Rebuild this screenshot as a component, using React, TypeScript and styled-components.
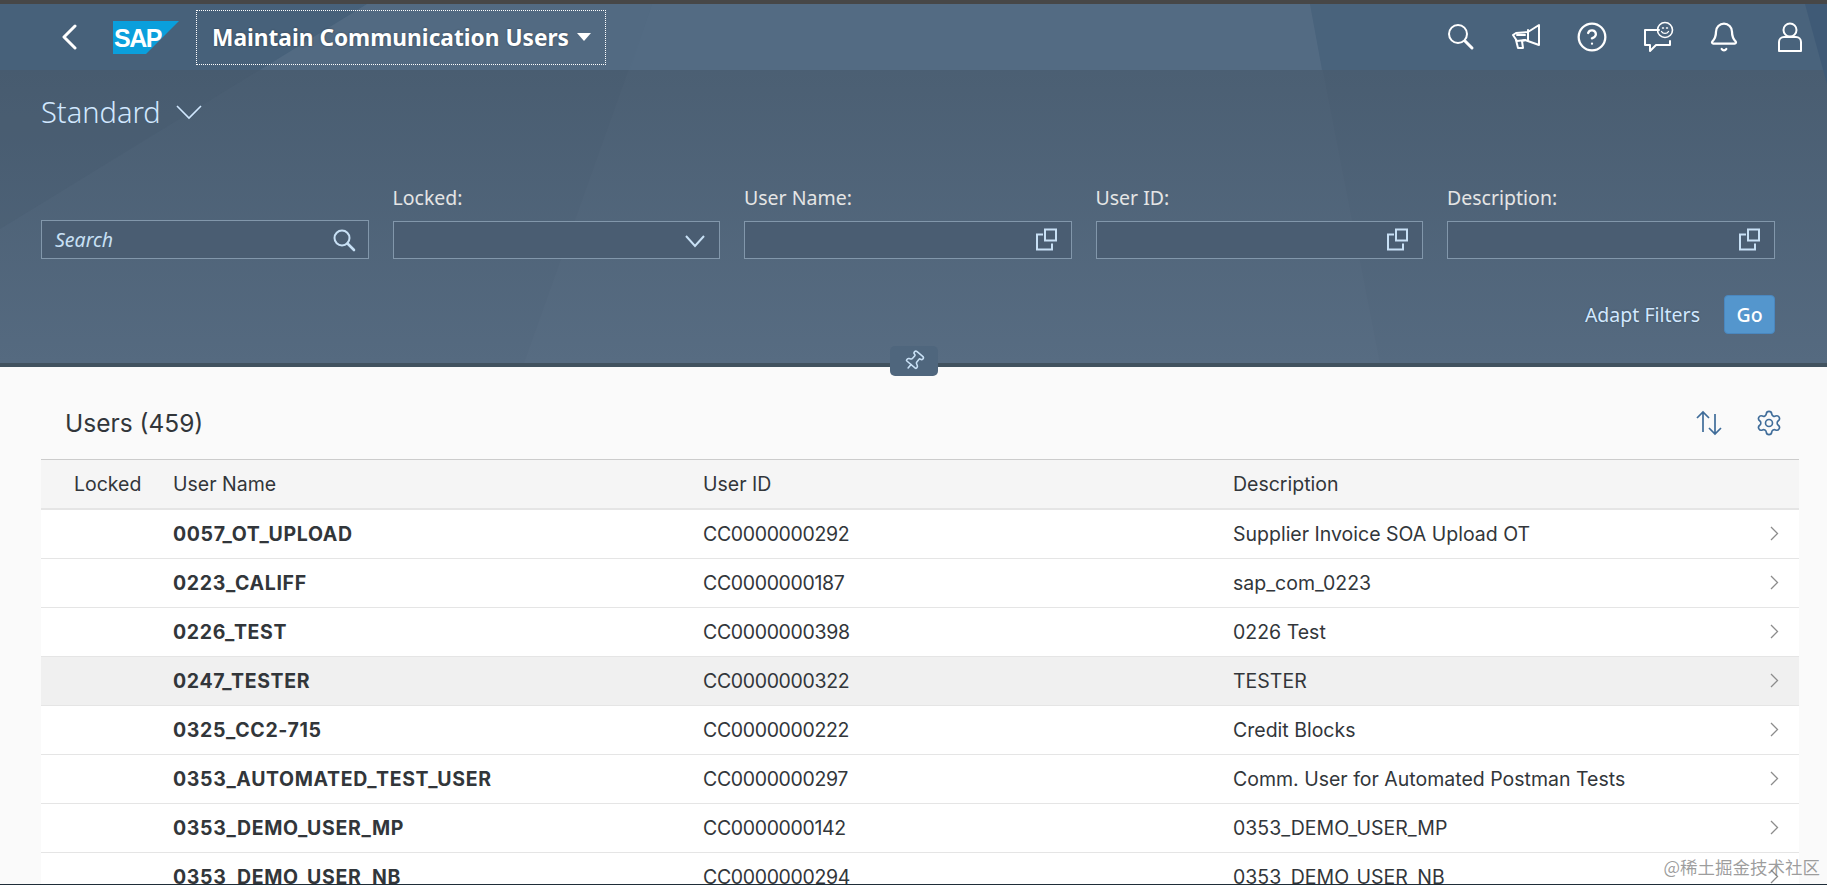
import React from "react";
import styled, { createGlobalStyle } from "styled-components";
import { Settings, Pin, CircleHelp, Bell } from "lucide-react";

const Global = createGlobalStyle`
  html, body { margin: 0; padding: 0; height: 100%; overflow: hidden; background: #fafafa; }
  body { font-family: "Noto Sans", "Open Sans", Arial, sans-serif; }
  * { box-sizing: border-box; }
`;

const Page = styled.div`
  position: relative;
  width: 1827px;
  height: 885px;
  overflow: hidden;
  background: #fafafa;
  border-bottom: 1px solid #1f2d38;
`;
const TopLine = styled.div`
  height: 4px;
  background: #474747;
`;
const Hero = styled.div`
  position: relative;
  height: 359px;
  background: #4a5f75;
  border-bottom: 4px solid #41525f;
  box-sizing: content-box;
`;
const Backdrop = styled.svg`
  position: absolute;
  inset: 0;
  width: 100%;
  height: 100%;
`;
const ShellBar = styled.header`
  position: relative;
  display: flex;
  align-items: center;
  height: 66px;
  padding: 0 21px 0 61px;
`;
const BackBtn = styled.svg`
  display: block;
  width: 18px;
  height: 26px;
  fill: none;
  stroke: #fff;
  stroke-width: 3;
  stroke-linecap: round;
  stroke-linejoin: round;
`;
const Logo = styled.svg`
  display: block;
  width: 66px;
  height: 33px;
  margin-left: 34px;
`;
const TitleBox = styled.div`
  display: flex;
  align-items: center;
  width: 410px;
  height: 55px;
  margin-left: 17px;
  padding-left: 15px;
  border: 1px dotted #fff;
  color: #fff;
  font-size: 22.7px;
  font-weight: 700;
  text-shadow: 0 0 2px rgba(0, 0, 0, 0.45);
  white-space: nowrap;
`;
const Caret = styled.span`
  width: 0;
  height: 0;
  margin-left: 8px;
  border-left: 7px solid transparent;
  border-right: 7px solid transparent;
  border-top: 8px solid #fff;
`;
const ShellIcons = styled.div`
  display: flex;
  gap: 34px;
  margin-left: auto;
  color: #fff;
`;
const ShellIcon = styled.svg`
  display: block;
  width: 32px;
  height: 32px;
  fill: none;
  stroke: currentColor;
  stroke-width: 2;
  stroke-linecap: round;
  stroke-linejoin: round;
`;
const FilterBar = styled.section`
  position: relative;
  height: 293px;
  padding: 0 52px 0 41px;
`;
const Variant = styled.div`
  display: flex;
  align-items: center;
  gap: 14px;
  height: 84px;
  padding-bottom: 1px;
  color: #d1e8ff;
  font-size: 29px;
  font-weight: 300;
`;
const VariantChevron = styled.svg`
  display: block;
  width: 28px;
  height: 18px;
  fill: none;
  stroke: #d1e8ff;
  stroke-width: 1.6;
`;
const FieldGrid = styled.div`
  display: grid;
  grid-template-columns: repeat(5, 327.5px);
  column-gap: 24px;
  margin-top: 30px;
`;
const Field = styled.div`
  display: flex;
  flex-direction: column;
  justify-content: flex-end;
  height: 75px;
`;
const Label = styled.label`
  height: 37px;
  color: #e5e5e5;
  font-size: 19.5px;
`;
const InputBox = styled.div`
  display: flex;
  align-items: center;
  justify-content: space-between;
  height: 39px;
  padding: 0 12px 0 13px;
  border: 1px solid #8297ab;
  background: #4a5d72;
  color: #c8e0f5;
  font-size: 19.5px;
  font-style: italic;
`;
const FieldIcon = styled.svg`
  display: block;
  width: 24px;
  height: 24px;
  fill: none;
  stroke: #c8e0f5;
  stroke-width: 2;
`;
const Actions = styled.div`
  display: flex;
  align-items: center;
  justify-content: flex-end;
  gap: 24px;
  margin-top: 36px;
`;
const AdaptLink = styled.span`
  color: #d1e8ff;
  font-size: 19.5px;
  text-shadow: 0 0 2px rgba(0, 0, 0, 0.3);
`;
const GoBtn = styled.span`
  display: flex;
  align-items: center;
  justify-content: center;
  width: 51px;
  height: 39px;
  border: 1px solid #4a87bf;
  border-radius: 4px;
  background: #5496cd;
  color: #fff;
  font-size: 19.5px;
  font-weight: 500;
`;
const PinTab = styled.div`
  position: absolute;
  left: 890px;
  top: 342px;
  display: flex;
  align-items: center;
  justify-content: center;
  width: 48px;
  height: 30px;
  border-radius: 5px;
  background: #4f667d;
  color: #c8e0f5;
`;
const PinIcon = styled(Pin)`
  transform: rotate(40deg);
`;
const Content = styled.main`
  padding: 0 28px 0 41px;
  font-family: Inter, "Noto Sans", sans-serif;
`;
const TableHead = styled.div`
  display: flex;
  align-items: center;
  justify-content: space-between;
  height: 92px;
  padding: 30px 16px 10px 24px;
`;
const TableTitle = styled.h2`
  margin: 0;
  color: #32363a;
  font-size: 24.5px;
  font-weight: 400;
`;
const Tools = styled.div`
  display: flex;
  align-items: center;
  gap: 33px;
  color: #3f6c99;
`;
const SortIcon = styled.svg`
  display: block;
  width: 26px;
  height: 26px;
  fill: none;
  stroke: #3f6c99;
  stroke-width: 1.7;
`;
const Row = styled.div<{ $head?: boolean; $hover?: boolean }>`
  display: grid;
  grid-template-columns: 132px 530px 530px 1fr 29px;
  align-items: center;
  height: ${(p) => (p.$head ? "51px" : "49px")};
  border-top: ${(p) => (p.$head ? "1px solid #ccc" : "none")};
  border-bottom: ${(p) => (p.$head ? "2px solid #e5e5e5" : "1px solid #e5e5e5")};
  background: ${(p) => (p.$head ? "#f5f5f5" : p.$hover ? "#f0f0f0" : "#fff")};
  color: #32363a;
  font-size: 19.5px;
`;
const LockedCell = styled.span`
  padding-left: 33px;
`;
const Name = styled.b`
  font-weight: 700;
  letter-spacing: 0.65px;
`;
const UserId = styled.span`
  letter-spacing: -0.35px;
`;
const RowChevron = styled.svg`
  display: block;
  width: 9px;
  height: 15px;
  margin-top: -2px;
  fill: none;
  stroke: #8c8c8c;
  stroke-width: 1.3;
`;
const Watermark = styled.div`
  position: absolute;
  right: 7px;
  bottom: 5px;
  color: rgba(120, 120, 120, 0.72);
  font-family: "Noto Sans CJK SC", sans-serif;
  font-size: 17.5px;
  white-space: nowrap;
`;

const rows: [string, string, string, boolean?][] = [
  ["0057_OT_UPLOAD", "CC0000000292", "Supplier Invoice SOA Upload OT"],
  ["0223_CALIFF", "CC0000000187", "sap_com_0223"],
  ["0226_TEST", "CC0000000398", "0226 Test"],
  ["0247_TESTER", "CC0000000322", "TESTER", true],
  ["0325_CC2-715", "CC0000000222", "Credit Blocks"],
  ["0353_AUTOMATED_TEST_USER", "CC0000000297", "Comm. User for Automated Postman Tests"],
  ["0353_DEMO_USER_MP", "CC0000000142", "0353_DEMO_USER_MP"],
  ["0353_DEMO_USER_NB", "CC0000000294", "0353_DEMO_USER_NB"],
];

const SearchGlyph = () => (
  <FieldIcon viewBox="0 0 24 24">
    <circle cx="10" cy="10" r="7.5" />
    <path d="M15.5 15.5 22 22" strokeLinecap="round" strokeWidth="2.6" />
  </FieldIcon>
);
const CopyGlyph = () => (
  <FieldIcon viewBox="0 0 24 24">
    <path d="M8 6.5H2v15h15v-6" />
    <rect x="10" y="1.5" width="11" height="11" />
  </FieldIcon>
);

const fields = ["User Name:", "User ID:", "Description:"];

export default function App() {
  return (
    <Page>
      <Global />
      <TopLine />
      <Hero>
        <Backdrop viewBox="0 0 1827 359" preserveAspectRatio="none">
          <defs>
            <linearGradient id="fade" x1="0" y1="0" x2="0" y2="1">
              <stop offset="0.18" stopColor="#495d71" />
              <stop offset="1" stopColor="#556a80" />
            </linearGradient>
          </defs>
          <rect width="1827" height="359" fill="url(#fade)" />
          <polygon points="0,0 367,0 0,225" fill="#3f5369" opacity=".2" />
          <polygon points="652,0 1310,0 1380,359 524,359" fill="#fff" opacity=".014" />
          <rect width="1827" height="66" fill="#4a7096" opacity=".3" />
          <polygon points="367,0 652,0 630,66 260,66" fill="#fff" opacity=".05" />
          <polygon points="652,0 1310,0 1322,66 630,66" fill="#fff" opacity=".05" />
          <polygon points="1805,0 1827,0 1827,80" fill="#3f5a76" />
        </Backdrop>
        <ShellBar>
          <BackBtn viewBox="0 0 18 26"><path d="M14 2 3 13l11 11" /></BackBtn>
          <Logo viewBox="0 0 66 33">
            <polygon points="0,0 66,0 33,33 0,33" fill="#0a9fdc" />
            <text x="1" y="26" fill="#fff" fontFamily="Liberation Sans" fontSize="25" fontWeight="700" letterSpacing="-1.5">SAP</text>
          </Logo>
          <TitleBox>Maintain Communication Users<Caret /></TitleBox>
          <ShellIcons>
            <ShellIcon viewBox="0 0 32 32">
              <circle cx="14" cy="13" r="9" />
              <path d="m21 20 7 7" strokeWidth="3" />
            </ShellIcon>
            <ShellIcon viewBox="0 0 32 32">
              <path d="M29 4v20l-14-5-8 1-4-6 3-2 12-1z" />
              <path d="M7 14h8M15 19l-3 1 1 7h-5l-2-8M18 9v10" />
            </ShellIcon>
            <CircleHelp size={32} strokeWidth={1.7} />
            <ShellIcon viewBox="0 0 32 32">
              <path d="M17 9H3v15h5v6l6-6h14v-4" />
              <circle cx="23" cy="9" r="7.5" strokeWidth="1.6" />
              <path d="M19.5 10.5c1.5 2.5 5.5 2.5 7 0M20.5 7h1M24.5 7h1" strokeWidth="1.4" />
            </ShellIcon>
            <Bell size={32} strokeWidth={1.7} />
            <ShellIcon viewBox="0 0 32 32">
              <circle cx="16" cy="9" r="6.5" />
              <path d="M5 30V21a5 5 0 0 1 5-5h12a5 5 0 0 1 5 5v9z" />
            </ShellIcon>
          </ShellIcons>
        </ShellBar>
        <FilterBar>
          <Variant>Standard <VariantChevron viewBox="0 0 28 18"><path d="M2 3l12 12L26 3" /></VariantChevron></Variant>
          <FieldGrid>
            <Field>
              <InputBox>Search <SearchGlyph /></InputBox>
            </Field>
            <Field>
              <Label>Locked:</Label>
              <InputBox><span /><FieldIcon viewBox="0 0 24 24" strokeWidth="1.6"><path d="M3 8l9 10 9-10" /></FieldIcon></InputBox>
            </Field>
            {fields.map((f) => (
              <Field key={f}>
                <Label>{f}</Label>
                <InputBox><span /><CopyGlyph /></InputBox>
              </Field>
            ))}
          </FieldGrid>
          <Actions>
            <AdaptLink>Adapt Filters</AdaptLink>
            <GoBtn>Go</GoBtn>
          </Actions>
        </FilterBar>
        <PinTab><PinIcon size={22} strokeWidth={1.7} /></PinTab>
      </Hero>
      <Content>
        <TableHead>
          <TableTitle>Users (459)</TableTitle>
          <Tools>
            <SortIcon viewBox="0 0 26 26">
              <path d="M7 22V2M1 8l6-6 6 6M19 4v20M13 18l6 6 6-6" />
            </SortIcon>
            <Settings size={28} strokeWidth={1.4} />
          </Tools>
        </TableHead>
        <Row $head>
          <LockedCell>Locked</LockedCell>
          <span>User Name</span>
          <span>User ID</span>
          <span>Description</span>
        </Row>
        {rows.map(([n, id, d, h]) => (
          <Row key={n} $hover={h}>
            <LockedCell />
            <Name>{n}</Name>
            <UserId>{id}</UserId>
            <span>{d}</span>
            <RowChevron viewBox="0 0 9 15"><path d="M1 1l6.5 6.5L1 14" /></RowChevron>
          </Row>
        ))}
      </Content>
      <Watermark>@稀土掘金技术社区</Watermark>
    </Page>
  );
}
